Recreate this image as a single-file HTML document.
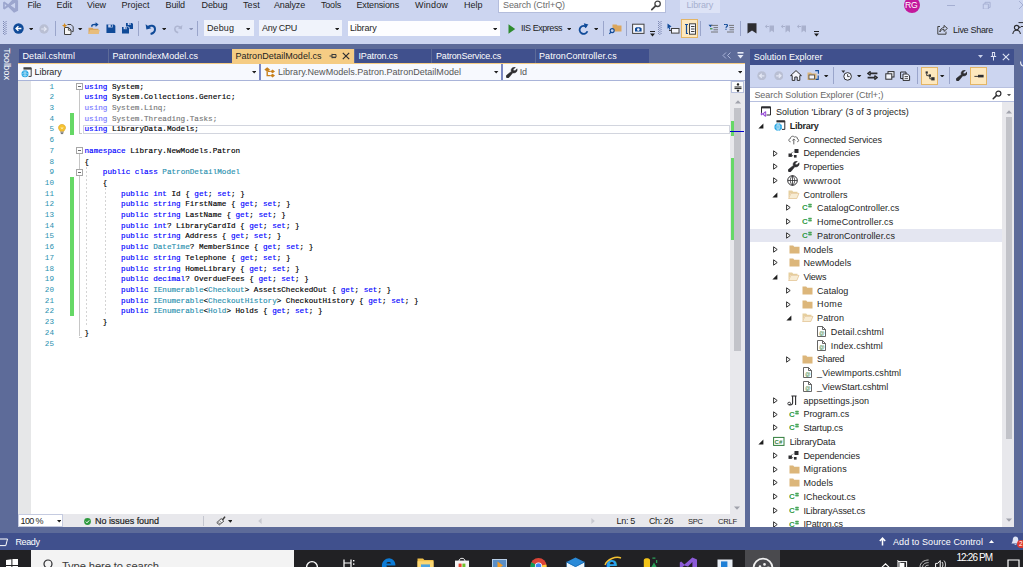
<!DOCTYPE html>
<html><head><meta charset="utf-8"><title>Library - Microsoft Visual Studio</title>
<style>
html,body{margin:0;padding:0;}
body{width:1023px;height:567px;overflow:hidden;position:relative;background:#ccd5f0;font-family:"Liberation Sans", sans-serif;}
#r{position:absolute;left:0;top:0;width:1023px;height:567px;overflow:hidden;}
#r div,#r span,#r svg,#r pre{position:absolute;}
#r span{white-space:pre;line-height:12px;}
#r pre{margin:0;font-family:"Liberation Mono", monospace;white-space:pre;-webkit-text-stroke:0.15px;}
.k{color:#0000ff}.t{color:#2b91af}.f{opacity:.55}
#r pre b{font-weight:400;position:static}
</style></head><body><div id="r">
<div style="left:0px;top:0px;width:1023px;height:44px;background:#ccd5f0;"></div>
<svg style="left:0px;top:-2px;" width="20" height="16" viewBox="0 -2 20 16"><path d="M3.1 2.3L4.4 1.4L8.2 4.2L13.6 -1.6L18.1 0.4V10.8L14 12.8L8.2 7L4.4 9.5L3.1 8.7ZM15.1 2.7L10.7 5.5L15.1 8.5ZM4.8 4V7.1L6.6 5.5Z" fill="#9ca6ce" fill-rule="evenodd"/></svg>
<span id="t0" style="left:27.5px;top:-1.0px;color:#1e1e1e;font-size:9.0px;letter-spacing:-0.254px;">File</span>
<span id="t1" style="left:56.5px;top:-1.0px;color:#1e1e1e;font-size:9.0px;letter-spacing:-0.004px;">Edit</span>
<span id="t2" style="left:87px;top:-1.0px;color:#1e1e1e;font-size:9.0px;letter-spacing:-0.090px;">View</span>
<span id="t3" style="left:121.5px;top:-1.0px;color:#1e1e1e;font-size:9.0px;letter-spacing:-0.002px;">Project</span>
<span id="t4" style="left:165.5px;top:-1.0px;color:#1e1e1e;font-size:9.0px;letter-spacing:-0.103px;">Build</span>
<span id="t5" style="left:201.5px;top:-1.0px;color:#1e1e1e;font-size:9.0px;letter-spacing:-0.106px;">Debug</span>
<span id="t6" style="left:243px;top:-1.0px;color:#1e1e1e;font-size:9.0px;letter-spacing:0.121px;">Test</span>
<span id="t7" style="left:274px;top:-1.0px;color:#1e1e1e;font-size:9.0px;letter-spacing:-0.147px;">Analyze</span>
<span id="t8" style="left:321px;top:-1.0px;color:#1e1e1e;font-size:9.0px;letter-spacing:-0.203px;">Tools</span>
<span id="t9" style="left:356.5px;top:-1.0px;color:#1e1e1e;font-size:9.0px;letter-spacing:-0.153px;">Extensions</span>
<span id="t10" style="left:415px;top:-1.0px;color:#1e1e1e;font-size:9.0px;letter-spacing:0.164px;">Window</span>
<span id="t11" style="left:464px;top:-1.0px;color:#1e1e1e;font-size:9.0px;letter-spacing:-0.004px;">Help</span>
<div style="left:498px;top:-1px;width:168px;height:14px;background:#fff;border:1px solid #b4bddc;box-sizing:border-box;"></div>
<span id="t12" style="left:503px;top:-0.7000000000000002px;color:#6a6a6a;font-size:9.0px;letter-spacing:-0.084px;">Search (Ctrl+Q)</span>
<svg style="left:649.8px;top:0px;" width="12" height="11" viewBox="0 0 12 11"><circle cx="7.6" cy="3.8" r="2.7" fill="none" stroke="#444" stroke-width="1.3"/><path d="M5.6 5.8L1.8 9.6" stroke="#444" stroke-width="1.7" stroke-linecap="round"/></svg>
<div style="left:680px;top:0px;width:39.5px;height:13px;background:#dde3f6;"></div>
<span id="t13" style="left:686.5px;top:-0.7000000000000002px;color:#a6afcf;font-size:9.0px;letter-spacing:-0.145px;">Library</span>
<div style="left:903.5px;top:-3px;width:16px;height:16px;background:#c3199c;border-radius:50%;"></div>
<span id="t14" style="left:905px;top:-0.5999999999999996px;color:#fff;font-size:8.6px;letter-spacing:-0.195px;">RG</span>
<div style="left:947.3px;top:4.6px;width:7.6px;height:1px;background:#a5afd2;"></div>
<svg style="left:981.6px;top:0.6px;" width="9.4" height="8.6" viewBox="0 0 11 10"><path d="M1.5 3.5H7.5V9.5H1.5ZM3.5 3.5V1.5H9.5V7.5H7.5" fill="none" stroke="#a5afd2" stroke-width="1.1"/></svg>
<svg style="left:1017.5px;top:0px;" width="8" height="10" viewBox="0 0 8 10"><path d="M1 1L9 9M9 1L1 9" stroke="#a5afd2" stroke-width="1"/></svg>
<svg style="left:3px;top:21px;" width="4" height="14" viewBox="0 0 4 14"><rect x="0" y="0" width="1" height="1" fill="#7d89b4"/><rect x="2.6" y="0" width="1" height="1" fill="#7d89b4"/><rect x="1.3" y="1" width="1" height="1" fill="#7d89b4"/><rect x="0" y="2" width="1" height="1" fill="#7d89b4"/><rect x="2.6" y="2" width="1" height="1" fill="#7d89b4"/><rect x="1.3" y="3" width="1" height="1" fill="#7d89b4"/><rect x="0" y="4" width="1" height="1" fill="#7d89b4"/><rect x="2.6" y="4" width="1" height="1" fill="#7d89b4"/><rect x="1.3" y="5" width="1" height="1" fill="#7d89b4"/><rect x="0" y="6" width="1" height="1" fill="#7d89b4"/><rect x="2.6" y="6" width="1" height="1" fill="#7d89b4"/><rect x="1.3" y="7" width="1" height="1" fill="#7d89b4"/><rect x="0" y="8" width="1" height="1" fill="#7d89b4"/><rect x="2.6" y="8" width="1" height="1" fill="#7d89b4"/><rect x="1.3" y="9" width="1" height="1" fill="#7d89b4"/><rect x="0" y="10" width="1" height="1" fill="#7d89b4"/><rect x="2.6" y="10" width="1" height="1" fill="#7d89b4"/><rect x="1.3" y="11" width="1" height="1" fill="#7d89b4"/><rect x="0" y="12" width="1" height="1" fill="#7d89b4"/><rect x="2.6" y="12" width="1" height="1" fill="#7d89b4"/><rect x="1.3" y="13" width="1" height="1" fill="#7d89b4"/></svg>
<svg style="left:12.5px;top:23px;" width="11" height="11" viewBox="0 0 11 11"><circle cx="5.5" cy="5.5" r="5.2" fill="#0f4a98"/><path d="M8.4 5.5H3.2M5.4 3.1L3 5.5L5.4 7.9" stroke="#fff" stroke-width="1.3" fill="none"/></svg>
<svg style="left:28.8px;top:27.7px;" width="4.4" height="2.6" viewBox="0 0 4.4 2.6"><path d="M0 0H4.4L2.2 2.6Z" fill="#1e1e1e"/></svg>
<svg style="left:39px;top:23.5px;" width="10" height="10" viewBox="0 0 10 10"><circle cx="5" cy="5" r="4.7" fill="#b9bfd3"/><path d="M2.2 5H7M5 2.9L7.2 5L5 7.1" stroke="#e4e8f5" stroke-width="1.2" fill="none"/></svg>
<div style="left:55px;top:21px;width:1px;height:14.5px;background:#9aa5cb;"></div>
<svg style="left:61.5px;top:22.5px;" width="12" height="12" viewBox="0 0 12 12"><path d="M5.5 1.5H9L11.2 3.8V8.6H9.6" fill="none" stroke="#424242" stroke-width="1"/><path d="M2.5 4.5H6.6L9 7V11.5H2.5Z" fill="#f6f6f6" stroke="#424242" stroke-width="1"/><path d="M6.4 4.5V7.2H9" fill="none" stroke="#424242" stroke-width="0.9"/><path d="M2.6 0L3.4 1.8L5.2 2.6L3.4 3.4L2.6 5.2L1.8 3.4L0 2.6L1.8 1.8Z" fill="#d18a1f"/></svg>
<svg style="left:78.3px;top:27.7px;" width="4.4" height="2.6" viewBox="0 0 4.4 2.6"><path d="M0 0H4.4L2.2 2.6Z" fill="#1e1e1e"/></svg>
<svg style="left:88px;top:22px;" width="12" height="13" viewBox="0 0 12 13"><path d="M0.5 5.8H4.5L5.5 6.8H10.5V12H0.5Z" fill="#d9a55c"/><path d="M2 8H11.8L10.4 12H0.5Z" fill="#e8bd7c"/><path d="M3 4.5C3 2.2 5 1.6 7.6 1.8V0.3L10.6 2.6L7.6 4.9V3.4C5.6 3.2 4.4 3.4 4.4 4.9Z" fill="#0f4a98"/></svg>
<svg style="left:105.8px;top:23.5px;" width="9.8" height="9.8" viewBox="0 0 11 11"><path d="M0.5 0.5H9L10.5 2V10.5H0.5Z" fill="#0f4a98"/><rect x="2.5" y="0.5" width="5" height="3.4" fill="#ccd5f0"/><rect x="5.3" y="1" width="1.4" height="2.2" fill="#0f4a98"/></svg>
<svg style="left:122px;top:23px;" width="11.2" height="10.6" viewBox="0 0 11.2 10.6"><path d="M4 0H10L11.2 1.2V6H4Z" fill="#0f4a98"/><rect x="5.8" y="0" width="3" height="2" fill="#ccd5f0"/><rect x="7.4" y="0.3" width="0.9" height="1.3" fill="#0f4a98"/><path d="M-0.4 3.6H6.6L7.6 4.6V11H-0.4Z" fill="#ccd5f0"/><path d="M0 4H6L7 5V10.6H0Z" fill="#0f4a98"/><rect x="1.6" y="4" width="3.2" height="2.2" fill="#ccd5f0"/><rect x="3.4" y="4.3" width="0.9" height="1.4" fill="#0f4a98"/></svg>
<div style="left:138.3px;top:21px;width:1px;height:14.5px;background:#9aa5cb;"></div>
<svg style="left:144.5px;top:22.5px;" width="12" height="12" viewBox="0 0 12 12"><path d="M2.6 4.4C5.2 1.6 9.8 2.4 10 6C10.1 8.6 8 10.4 5.6 11" fill="none" stroke="#0f4a98" stroke-width="2"/><path d="M0.6 1.2L1.4 6.6L6.4 5.2Z" fill="#0f4a98"/></svg>
<svg style="left:161.8px;top:27.7px;" width="4.4" height="2.6" viewBox="0 0 4.4 2.6"><path d="M0 0H4.4L2.2 2.6Z" fill="#1e1e1e"/></svg>
<svg style="left:172.5px;top:23.5px;" width="10" height="10" viewBox="0 0 10 10"><path d="M7.6 3.6C5.6 1.4 2 2 1.8 4.8C1.7 6.8 3.4 8.2 5.2 8.8" fill="none" stroke="#aeb6d2" stroke-width="1.6"/><path d="M9.4 1L8.8 5.4L4.8 4.2Z" fill="#aeb6d2"/></svg>
<svg style="left:188.8px;top:27.7px;" width="4.4" height="2.6" viewBox="0 0 4.4 2.6"><path d="M0 0H4.4L2.2 2.6Z" fill="#8d96b8"/></svg>
<div style="left:197.2px;top:21px;width:1px;height:14.5px;background:#9aa5cb;"></div>
<div style="left:204.3px;top:20.2px;width:49.8px;height:15.8px;background:#f0f3fb;"></div>
<span id="t15" style="left:207px;top:22.0px;color:#1e1e1e;font-size:9.0px;letter-spacing:0.094px;">Debug</span>
<svg style="left:245.8px;top:27.7px;" width="4.4" height="2.6" viewBox="0 0 4.4 2.6"><path d="M0 0H4.4L2.2 2.6Z" fill="#1e1e1e"/></svg>
<div style="left:259px;top:20.2px;width:83px;height:15.8px;background:#f0f3fb;"></div>
<span id="t16" style="left:262px;top:22.0px;color:#1e1e1e;font-size:9.0px;letter-spacing:-0.288px;">Any CPU</span>
<svg style="left:334.8px;top:27.7px;" width="4.4" height="2.6" viewBox="0 0 4.4 2.6"><path d="M0 0H4.4L2.2 2.6Z" fill="#1e1e1e"/></svg>
<div style="left:347.5px;top:20.5px;width:152px;height:15.5px;background:#fdfdff;"></div>
<span id="t17" style="left:350px;top:22.0px;color:#1e1e1e;font-size:9.0px;letter-spacing:-0.145px;">Library</span>
<svg style="left:492.8px;top:27.7px;" width="4.4" height="2.6" viewBox="0 0 4.4 2.6"><path d="M0 0H4.4L2.2 2.6Z" fill="#1e1e1e"/></svg>
<svg style="left:508px;top:23.5px;" width="8" height="10" viewBox="0 0 8 10"><path d="M0.5 0.3L7.2 5L0.5 9.7Z" fill="#2e8b2e"/></svg>
<span id="t18" style="left:521px;top:22.0px;color:#1e1e1e;font-size:9.0px;letter-spacing:-0.456px;">IIS Express</span>
<svg style="left:566.8px;top:27.7px;" width="4.4" height="2.6" viewBox="0 0 4.4 2.6"><path d="M0 0H4.4L2.2 2.6Z" fill="#1e1e1e"/></svg>
<svg style="left:577.5px;top:22.5px;" width="11" height="12" viewBox="0 0 11 12"><path d="M8.6 4.2A4 4 0 1 0 9.4 8.2" fill="none" stroke="#0f4a98" stroke-width="1.8"/><path d="M5.8 0.2L10.4 1.6L7.2 5.2Z" fill="#0f4a98"/></svg>
<svg style="left:593.8px;top:27.7px;" width="4.4" height="2.6" viewBox="0 0 4.4 2.6"><path d="M0 0H4.4L2.2 2.6Z" fill="#1e1e1e"/></svg>
<div style="left:602.7px;top:21px;width:1px;height:14.5px;background:#9aa5cb;"></div>
<svg style="left:609px;top:22.5px;" width="13" height="12" viewBox="0 0 13 12"><path d="M3.5 1.5H7.5L8.5 2.5H12.5V8.5H3.5Z" fill="#dba65c"/><circle cx="3.2" cy="7.6" r="2" fill="#ccd5f0" stroke="#0f4a98" stroke-width="1.1"/><path d="M1.8 9.2L0.4 11" stroke="#0f4a98" stroke-width="1.2"/></svg>
<div style="left:625.7px;top:21px;width:1px;height:14.5px;background:#9aa5cb;"></div>
<svg style="left:632px;top:22.5px;" width="13" height="12" viewBox="0 0 13 12"><rect x="0.6" y="1.2" width="11.4" height="9.2" fill="#f4f6fc" stroke="#424242" stroke-width="1"/><path d="M3 8.6V5.2L4.4 4.2H8L9.6 5.2V8.6Z" fill="#0f4a98"/><circle cx="6.3" cy="6.6" r="1.3" fill="#f4f6fc"/></svg>
<svg style="left:650px;top:30.5px;" width="5" height="6" viewBox="0 0 5 6"><rect x="0" y="0" width="5" height="1" fill="#1e1e1e"/><path d="M0 2.5H5L2.5 5.4Z" fill="#1e1e1e"/></svg>
<svg style="left:658px;top:21px;" width="4" height="14" viewBox="0 0 4 14"><rect x="0" y="0" width="1" height="1" fill="#7d89b4"/><rect x="2.6" y="0" width="1" height="1" fill="#7d89b4"/><rect x="1.3" y="1" width="1" height="1" fill="#7d89b4"/><rect x="0" y="2" width="1" height="1" fill="#7d89b4"/><rect x="2.6" y="2" width="1" height="1" fill="#7d89b4"/><rect x="1.3" y="3" width="1" height="1" fill="#7d89b4"/><rect x="0" y="4" width="1" height="1" fill="#7d89b4"/><rect x="2.6" y="4" width="1" height="1" fill="#7d89b4"/><rect x="1.3" y="5" width="1" height="1" fill="#7d89b4"/><rect x="0" y="6" width="1" height="1" fill="#7d89b4"/><rect x="2.6" y="6" width="1" height="1" fill="#7d89b4"/><rect x="1.3" y="7" width="1" height="1" fill="#7d89b4"/><rect x="0" y="8" width="1" height="1" fill="#7d89b4"/><rect x="2.6" y="8" width="1" height="1" fill="#7d89b4"/><rect x="1.3" y="9" width="1" height="1" fill="#7d89b4"/><rect x="0" y="10" width="1" height="1" fill="#7d89b4"/><rect x="2.6" y="10" width="1" height="1" fill="#7d89b4"/><rect x="1.3" y="11" width="1" height="1" fill="#7d89b4"/><rect x="0" y="12" width="1" height="1" fill="#7d89b4"/><rect x="2.6" y="12" width="1" height="1" fill="#7d89b4"/><rect x="1.3" y="13" width="1" height="1" fill="#7d89b4"/></svg>
<svg style="left:667px;top:22.5px;" width="13" height="12" viewBox="0 0 13 12"><path d="M0.5 0.5L4.6 3.6L2.6 4.2L3.4 6.4L2.4 6.8L1.6 4.8L0.5 5.8Z" fill="#0f4a98"/><rect x="4.5" y="5.5" width="7.5" height="4.6" fill="#f4f6fc" stroke="#424242" stroke-width="1"/><path d="M2 7.5H4.5" stroke="#424242" stroke-width="1"/></svg>
<div style="left:681px;top:19px;width:16.5px;height:18.5px;background:#fde8be;border:1px solid #e3b566;box-sizing:border-box;"></div>
<svg style="left:683.5px;top:22.5px;" width="12" height="12" viewBox="0 0 12 12"><path d="M1 1.5H4M2.5 1.5V10.5H4" fill="none" stroke="#0f4a98" stroke-width="1.2"/><rect x="5.5" y="0.8" width="6" height="10.4" fill="#f4f6fc" stroke="#424242" stroke-width="1"/><path d="M7 3.5H10.5M7 6H10.5M7 8.5H10.5" stroke="#424242" stroke-width="1"/></svg>
<div style="left:699.7px;top:21px;width:1px;height:14.5px;background:#9aa5cb;"></div>
<svg style="left:707.5px;top:23.5px;" width="11" height="10" viewBox="0 0 11 10"><path d="M0.5 0.8H4.5L2.5 3.2Z" fill="#0f4a98"/><path d="M3 1.4H10M5.5 3.6H10M5.5 5.8H10M3 8H10" stroke="#6a6a6a" stroke-width="0.9"/><path d="M2 4.8H4.5" stroke="#2e8b2e" stroke-width="1.1"/></svg>
<svg style="left:723.5px;top:23.5px;" width="11" height="10" viewBox="0 0 11 10"><path d="M0.4 1C0.6 -0.2 3.6 -0.2 3.4 1.6C3.3 2.6 2 2.8 2 3.8M2 4.8V5.8" fill="none" stroke="#0f4a98" stroke-width="1.2"/><path d="M5 1.4H10M5.5 3.6H10M5.5 5.8H10M3 8H10" stroke="#6a6a6a" stroke-width="0.9"/></svg>
<div style="left:739.7px;top:21px;width:1px;height:14.5px;background:#9aa5cb;"></div>
<svg style="left:746.5px;top:22.5px;" width="10" height="11" viewBox="0 0 10 11"><path d="M0.5 0.3H9.5V10.6L5 7.4L0.5 10.6Z" fill="#2d2d30"/></svg>
<svg style="left:765px;top:23.5px;" width="10" height="9" viewBox="0 0 10 9"><path d="M4.5 1.5H9V8.5L6.8 6.6L4.5 8.5Z" fill="#a9b1cd"/><path d="M0.5 2.5H4M2 0.8L0.4 2.5L2 4.2" stroke="#a9b1cd" stroke-width="1" fill="none"/></svg>
<svg style="left:781px;top:23.5px;" width="10" height="9" viewBox="0 0 10 9"><path d="M4.5 1.5H9V8.5L6.8 6.6L4.5 8.5Z" fill="#a9b1cd"/><path d="M0.5 2.5H4M2 0.8L0.4 2.5L2 4.2" stroke="#a9b1cd" stroke-width="1" fill="none"/></svg>
<svg style="left:797px;top:23.5px;" width="10" height="9" viewBox="0 0 10 9"><path d="M4.5 1.5H9V8.5L6.8 6.6L4.5 8.5Z" fill="#a9b1cd"/><path d="M0.5 2.5H4M2 0.8L0.4 2.5L2 4.2" stroke="#a9b1cd" stroke-width="1" fill="none"/></svg>
<svg style="left:813.5px;top:30.5px;" width="5" height="6" viewBox="0 0 5 6"><rect x="0" y="0" width="5" height="1" fill="#1e1e1e"/><path d="M0 2.5H5L2.5 5.4Z" fill="#1e1e1e"/></svg>
<svg style="left:936.5px;top:24.2px;" width="11" height="11" viewBox="0 0 11 11"><path d="M3 2.5H0.8V10.2H9V7.6" fill="none" stroke="#424242" stroke-width="1"/><path d="M2.8 8C3 5 5 3.6 7 3.6V1.4L10.4 4.4L7 7.4V5.4C5.2 5.4 3.8 6 2.8 8Z" fill="none" stroke="#424242" stroke-width="1"/></svg>
<span id="t19" style="left:953px;top:24.1px;color:#1e1e1e;font-size:9.0px;letter-spacing:-0.303px;">Live Share</span>
<svg style="left:1011.5px;top:22px;" width="12" height="13" viewBox="0 0 12 13"><circle cx="4.6" cy="5.6" r="2.2" fill="none" stroke="#2d2d30" stroke-width="1.1"/><path d="M0.8 12C1.2 9 3 8.2 4.6 8.2C6.2 8.2 8 9 8.4 12" fill="none" stroke="#2d2d30" stroke-width="1.1"/><path d="M6.5 0.6H12V4.5H9L7.6 6V4.5" fill="none" stroke="#2d2d30" stroke-width="1"/></svg>
<div style="left:0px;top:43.7px;width:1023px;height:505.8px;background:#5d6b99;"></div>
<div style="left:1021.6px;top:49px;width:1.4px;height:483px;background:#5568ad;"></div>
<svg style="left:1020px;top:61px;" width="3" height="6" viewBox="0 0 3 6"><path d="M0.6 0.5C0.4 3 1.4 4.6 3 5" fill="none" stroke="#e8ecf8" stroke-width="1.1"/></svg>
<span id="tb" style="left:0.7px;top:48.4px;color:#fff;font-size:9.3px;writing-mode:vertical-rl;line-height:12px;">Toolbox</span>
<div style="left:19px;top:49px;width:88.5px;height:13.5px;background:#40508d;"></div>
<span id="t20" style="left:22.5px;top:50.1px;color:#fff;font-size:9.0px;letter-spacing:0.076px;">Detail.cshtml</span>
<div style="left:108.5px;top:49px;width:123.0px;height:13.5px;background:#40508d;"></div>
<span id="t21" style="left:112.5px;top:50.1px;color:#fff;font-size:9.0px;letter-spacing:0.050px;">PatronIndexModel.cs</span>
<div style="left:354.5px;top:49px;width:76.5px;height:13.5px;background:#40508d;"></div>
<span id="t22" style="left:358.5px;top:50.1px;color:#fff;font-size:9.0px;letter-spacing:-0.153px;">IPatron.cs</span>
<div style="left:432px;top:49px;width:103px;height:13.5px;background:#40508d;"></div>
<span id="t23" style="left:436px;top:50.1px;color:#fff;font-size:9.0px;letter-spacing:-0.189px;">PatronService.cs</span>
<div style="left:536px;top:49px;width:113px;height:13.5px;background:#40508d;"></div>
<span id="t24" style="left:539px;top:50.1px;color:#fff;font-size:9.0px;letter-spacing:0.061px;">PatronController.cs</span>
<div style="left:232px;top:48.5px;width:122px;height:14px;background:#f5cc84;"></div>
<span id="t25" style="left:235.5px;top:50.1px;color:#1e1e1e;font-size:9.0px;letter-spacing:0.023px;">PatronDetailModel.cs</span>
<svg style="left:328.5px;top:51.5px;" width="8" height="8" viewBox="0 0 8 8"><path d="M0.5 4H3M3 1.8V6.2M3 2.5H7V5.2H3M3 5.6H7" fill="none" stroke="#3b3b3b" stroke-width="1"/></svg>
<svg style="left:342px;top:51.5px;" width="8" height="8" viewBox="0 0 8 8"><path d="M0.8 0.8L7.2 7.2M7.2 0.8L0.8 7.2" stroke="#2d2d30" stroke-width="1.2"/></svg>
<div style="left:18px;top:62.5px;width:726.5px;height:1.8px;background:#f5cc84;"></div>
<svg style="left:722px;top:52px;" width="10" height="7" viewBox="0 0 10 7"><path d="M4 0.5L1 3.5L4 6.5M8.5 0.5L5.5 3.5L8.5 6.5" fill="none" stroke="#aab4d8" stroke-width="1"/></svg>
<svg style="left:737px;top:51.5px;" width="7" height="7" viewBox="0 0 7 7"><rect x="0.5" y="0" width="6" height="1.6" fill="#e6eaf6"/><path d="M0.5 3H6.5L3.5 6.4Z" fill="#e6eaf6"/></svg>
<div style="left:18px;top:64px;width:726.5px;height:16.5px;background:#f7f9fe;border-bottom:1px solid #a9b4d9;box-sizing:border-box;"></div>
<div style="left:259px;top:64px;width:2px;height:16px;background:#7b88c2;"></div>
<div style="left:501px;top:64px;width:2px;height:16px;background:#7b88c2;"></div>
<svg style="left:21px;top:66.5px;" width="11" height="11" viewBox="0 0 11 11"><path d="M2.5 0.8H10.2V9.4H7.5" fill="none" stroke="#424242" stroke-width="1"/><path d="M2.5 0.8H10.2V2.6H2.5Z" fill="#424242"/><circle cx="4" cy="6.8" r="3.5" fill="#1ba1e2"/><path d="M0.6 6.8H7.4M4 3.4V10.2M1.6 4.6C3 5.6 5 5.6 6.4 4.6M1.6 9C3 8 5 8 6.4 9" stroke="#d8f0fb" stroke-width="0.6" fill="none"/></svg>
<span id="t26" style="left:34.5px;top:66.3px;color:#1e1e1e;font-size:9.0px;letter-spacing:-0.045px;">Library</span>
<svg style="left:251.8px;top:71.4px;" width="4.4" height="2.6" viewBox="0 0 4.4 2.6"><path d="M0 0H4.4L2.2 2.6Z" fill="#1e1e1e"/></svg>
<svg style="left:264px;top:66.5px;" width="12" height="11" viewBox="0 0 12 11"><path d="M0.4 2.6L3.2 0.2L6 2.6L3.2 5Z" fill="#c8811d"/><path d="M6.2 4.4L8.6 2.6L11 4.4L8.6 6.2Z" fill="#c8811d"/><path d="M6.2 8.6L8.6 6.8L11 8.6L8.6 10.4Z" fill="#c8811d"/><path d="M3.2 4.4V8.6H6.6M4 4.4H6.6" stroke="#c8811d" stroke-width="1.4" fill="none"/></svg>
<span id="t27" style="left:278px;top:66.3px;color:#555;font-size:9.0px;letter-spacing:0.026px;">Library.NewModels.Patron.PatronDetailModel</span>
<svg style="left:494.2px;top:71.4px;" width="4.4" height="2.6" viewBox="0 0 4.4 2.6"><path d="M0 0H4.4L2.2 2.6Z" fill="#1e1e1e"/></svg>
<svg style="left:506px;top:66.5px;" width="11.5" height="11" viewBox="0 0 11.5 11"><path d="M9.4 0.4C7.6 -0.2 5.6 0.8 5.2 2.6C5 3.4 5.2 4 5.4 4.4L0.6 8.2C-0.2 9 0 10 0.6 10.6C1.2 11.2 2.2 11.2 3 10.4L6.8 5.8C8.4 6.4 10.4 5.6 11 3.8C11.2 3.2 11.2 2.4 11 1.8L9 3.8L7.4 3.6L7.2 2.2Z" fill="#2d2d30" stroke="#2d2d30" stroke-width="0.5"/></svg>
<span id="t28" style="left:519.7px;top:66.3px;color:#555;font-size:9.0px;letter-spacing:-0.108px;">Id</span>
<svg style="left:737.5px;top:71.4px;" width="4.4" height="2.6" viewBox="0 0 4.4 2.6"><path d="M0 0H4.4L2.2 2.6Z" fill="#1e1e1e"/></svg>
<div style="left:18px;top:80.5px;width:712px;height:433.5px;background:#fff;"></div>
<div style="left:18px;top:80.5px;width:13px;height:433.5px;background:#e6e7e8;"></div>
<div style="left:70px;top:113.15px;width:4px;height:21.4px;background:#66d866;"></div>
<div style="left:70px;top:177.35px;width:4px;height:139.1px;background:#66d866;"></div>
<div style="left:83px;top:124.5px;width:646.5px;height:9px;background:transparent;border:1px solid #d2d5de;box-sizing:border-box;"></div>
<div style="left:78.8px;top:89.9px;width:1.5px;height:43.29999999999998px;background:#c6c6c6;"></div>
<div style="left:79px;top:133.2px;width:3px;height:1px;background:#c6c6c6;"></div>
<div style="left:78.8px;top:154.1px;width:1.5px;height:182.4px;background:#c6c6c6;"></div>
<div style="left:79px;top:336.5px;width:3px;height:1px;background:#c6c6c6;"></div>
<svg style="left:76px;top:82.9px;" width="7" height="7" viewBox="0 0 7 7"><rect x="0.5" y="0.5" width="6" height="6" fill="#fff" stroke="#a6a6a6" stroke-width="1"/><path d="M2 3.5H5" stroke="#6a6a6a" stroke-width="1"/></svg>
<svg style="left:76px;top:147.1px;" width="7" height="7" viewBox="0 0 7 7"><rect x="0.5" y="0.5" width="6" height="6" fill="#fff" stroke="#a6a6a6" stroke-width="1"/><path d="M2 3.5H5" stroke="#6a6a6a" stroke-width="1"/></svg>
<svg style="left:76px;top:168.5px;" width="7" height="7" viewBox="0 0 7 7"><rect x="0.5" y="0.5" width="6" height="6" fill="#fff" stroke="#a6a6a6" stroke-width="1"/><path d="M2 3.5H5" stroke="#6a6a6a" stroke-width="1"/></svg>
<div style="left:86px;top:166.65px;width:1px;height:160.49999999999997px;background:repeating-linear-gradient(to bottom,#d4d4d4 0,#d4d4d4 2px,transparent 2px,transparent 4px);"></div>
<div style="left:105px;top:188.05px;width:1px;height:128.39999999999992px;background:repeating-linear-gradient(to bottom,#d4d4d4 0,#d4d4d4 2px,transparent 2px,transparent 4px);"></div>
<svg style="left:58px;top:123.69999999999999px;" width="8" height="11" viewBox="0 0 8 11"><path d="M4 0.4C1.8 0.4 0.5 2 0.5 3.7C0.5 5.2 1.6 5.8 2 7.2H6C6.4 5.8 7.5 5.2 7.5 3.7C7.5 2 6.2 0.4 4 0.4Z" fill="#f7c331" stroke="#d9a019" stroke-width="0.6"/><path d="M2.4 8.2H5.6M2.8 9.6H5.2" stroke="#6b6b6b" stroke-width="1"/><path d="M3 3.2L4 5L5 3.2" stroke="#fff6cf" stroke-width="0.7" fill="none"/></svg>
<pre style="left:24px;top:81.65px;width:30px;text-align:right;font-size:7.633px;line-height:10.7px;color:#2b91af;-webkit-text-stroke:0;">1
2
3
4
5
6
7
8
9
10
11
12
13
14
15
16
17
18
19
20
21
22
23
24
25</pre>
<pre style="left:84.5px;top:81.65px;font-size:7.633px;line-height:10.7px;color:#000;"><b class="k">using</b> System;
<b class="k">using</b> System.Collections.Generic;
<b class="f"><b class="k">using</b> System.Linq;</b>
<b class="f"><b class="k">using</b> System.Threading.Tasks;</b>
<b class="k">using</b> LibraryData.Models;

<b class="k">namespace</b> Library.NewModels.Patron
{
    <b class="k">public</b> <b class="k">class</b> <b class="t">PatronDetailModel</b>
    {
        <b class="k">public</b> <b class="k">int</b> Id { <b class="k">get</b>; <b class="k">set</b>; }
        <b class="k">public</b> <b class="k">string</b> FirstName { <b class="k">get</b>; <b class="k">set</b>; }
        <b class="k">public</b> <b class="k">string</b> LastName { <b class="k">get</b>; <b class="k">set</b>; }
        <b class="k">public</b> <b class="k">int</b>? LibraryCardId { <b class="k">get</b>; <b class="k">set</b>; }
        <b class="k">public</b> <b class="k">string</b> Address { <b class="k">get</b>; <b class="k">set</b>; }
        <b class="k">public</b> <b class="t">DateTime</b>? MemberSince { <b class="k">get</b>; <b class="k">set</b>; }
        <b class="k">public</b> <b class="k">string</b> Telephone { <b class="k">get</b>; <b class="k">set</b>; }
        <b class="k">public</b> <b class="k">string</b> HomeLibrary { <b class="k">get</b>; <b class="k">set</b>; }
        <b class="k">public</b> <b class="k">decimal</b>? OverdueFees { <b class="k">get</b>; <b class="k">set</b>; }
        <b class="k">public</b> <b class="t">IEnumerable</b>&lt;<b class="t">Checkout</b>&gt; AssetsCheckedOut { <b class="k">get</b>; <b class="k">set</b>; }
        <b class="k">public</b> <b class="t">IEnumerable</b>&lt;<b class="t">CheckoutHistory</b>&gt; CheckoutHistory { <b class="k">get</b>; <b class="k">set</b>; }
        <b class="k">public</b> <b class="t">IEnumerable</b>&lt;<b class="t">Hold</b>&gt; Holds { <b class="k">get</b>; <b class="k">set</b>; }
    }
}
</pre>
<div style="left:730px;top:80.5px;width:14.5px;height:433.5px;background:#e8e8ec;"></div>
<div style="left:730.5px;top:80.5px;width:13.5px;height:12.5px;background:#fdfdfd;border:1px solid #b8c0dc;box-sizing:border-box;"></div>
<svg style="left:733.5px;top:82.5px;" width="8" height="9" viewBox="0 0 8 9"><path d="M0.5 4H7.5M0.5 5.6H7.5M4 0V3M4 6.6V9" stroke="#1e1e1e" stroke-width="1"/><path d="M2.4 2L4 0.2L5.6 2ZM2.4 7L4 8.8L5.6 7Z" fill="#1e1e1e"/></svg>
<svg style="left:734.5px;top:99.5px;" width="6" height="4" viewBox="0 0 6 4"><path d="M0 3.6L3 0.2L6 3.6Z" fill="#a0a2ab"/></svg>
<div style="left:733.5px;top:107.5px;width:7.5px;height:243px;background:#c2c3c9;"></div>
<div style="left:730.5px;top:120.5px;width:3.5px;height:15px;background:#66d866;"></div>
<div style="left:730.5px;top:157.5px;width:3.5px;height:82px;background:#66d866;"></div>
<div style="left:730px;top:131px;width:14px;height:1px;background:#0000cd;"></div>
<svg style="left:734px;top:505.8px;" width="6" height="4" viewBox="0 0 6 4"><path d="M0 0.4L3 3.8L6 0.4Z" fill="#a0a2ab"/></svg>
<div style="left:18px;top:514px;width:726.5px;height:13px;background:#e8e8ec;"></div>
<div style="left:18.3px;top:514.3px;width:45px;height:12.5px;background:#fff;border:1px solid #c5cbe0;box-sizing:border-box;"></div>
<span id="t29" style="left:20.5px;top:515.3px;color:#1e1e1e;font-size:9.0px;letter-spacing:-0.606px;">100 %</span>
<svg style="left:56.8px;top:520.2px;" width="4.4" height="2.6" viewBox="0 0 4.4 2.6"><path d="M0 0H4.4L2.2 2.6Z" fill="#1e1e1e"/></svg>
<svg style="left:83.5px;top:517.8px;" width="7" height="7" viewBox="0 0 7 7"><circle cx="3.5" cy="3.5" r="3.4" fill="#2f9a3f"/><path d="M1.8 3.6L3 4.8L5.2 2.4" stroke="#fff" stroke-width="1" fill="none"/></svg>
<span id="t30" style="left:95px;top:515.3px;color:#1e1e1e;font-size:9.0px;letter-spacing:-0.036px;-webkit-text-stroke:0.2px;">No issues found</span>
<div style="left:203px;top:516px;width:1px;height:10px;background:#c4c6cf;"></div>
<svg style="left:215.5px;top:516px;" width="10" height="10" viewBox="0 0 10 10"><path d="M5.2 2.6L7.8 5.2L3.4 8.8L0.8 6.6Z" fill="#f4f4f6" stroke="#3a3a3a" stroke-width="0.9"/><path d="M6.4 4L9 0.6" stroke="#3a3a3a" stroke-width="1.5"/><path d="M2.4 6.2L4 8M3.8 5L5.4 6.8" stroke="#3a3a3a" stroke-width="0.6"/></svg>
<svg style="left:227.7px;top:520.1999999999999px;" width="4.6" height="2.8" viewBox="0 0 4.6 2.8"><path d="M0 0H4.6L2.3 2.8Z" fill="#1e1e1e"/></svg>
<svg style="left:257.5px;top:518px;" width="4" height="6" viewBox="0 0 4 6"><path d="M3.6 0L0.2 3L3.6 6Z" fill="#c8c9d0"/></svg>
<svg style="left:591px;top:518px;" width="4" height="6" viewBox="0 0 4 6"><path d="M0.4 0L3.8 3L0.4 6Z" fill="#c8c9d0"/></svg>
<span id="t31" style="left:616.5px;top:515.3px;color:#1e1e1e;font-size:9.0px;letter-spacing:-0.306px;">Ln: 5</span>
<span id="t32" style="left:649px;top:515.3px;color:#1e1e1e;font-size:9.0px;letter-spacing:-0.422px;">Ch: 26</span>
<span id="t33" style="left:688px;top:516.1999999999999px;color:#1e1e1e;font-size:7.6px;letter-spacing:-0.308px;">SPC</span>
<span id="t34" style="left:718px;top:516.1999999999999px;color:#1e1e1e;font-size:7.6px;letter-spacing:-0.236px;">CRLF</span>
<div style="left:750.2px;top:49px;width:264.19999999999993px;height:15.5px;background:#40508d;"></div>
<span id="t35" style="left:753.8px;top:51.4px;color:#fff;font-size:9.0px;letter-spacing:0.009px;">Solution Explorer</span>
<svg style="left:978.2px;top:55.1px;" width="5" height="3" viewBox="0 0 5 3"><path d="M0 0H5L2.5 3Z" fill="#c9d0ea"/></svg>
<svg style="left:989.5px;top:52px;" width="7" height="9" viewBox="0 0 7 9"><path d="M2 0.5H5M2.4 0.5V4.5M4.6 0.5V4.5M0.8 4.5H6.2M3.5 4.5V8.5" stroke="#dfe4f4" stroke-width="1" fill="none"/></svg>
<svg style="left:1002px;top:52.5px;" width="8" height="8" viewBox="0 0 8 8"><path d="M0.8 0.8L7.2 7.2M7.2 0.8L0.8 7.2" stroke="#dfe4f4" stroke-width="1.1"/></svg>
<div style="left:750.2px;top:64.5px;width:264.19999999999993px;height:22.2px;background:#ccd5f0;"></div>
<svg style="left:757px;top:70.8px;" width="9.6" height="9.6" viewBox="0 0 9.6 9.6"><circle cx="4.8" cy="4.8" r="4.5" fill="#b9bfd3"/><path d="M7.4 4.8H2.8M4.8 2.8L2.6 4.8L4.8 6.8" stroke="#e4e8f5" stroke-width="1.2" fill="none"/></svg>
<svg style="left:773.6px;top:70.8px;" width="9.6" height="9.6" viewBox="0 0 9.6 9.6"><circle cx="4.8" cy="4.8" r="4.5" fill="#b9bfd3"/><path d="M2.2 4.8H6.8M4.8 2.8L7 4.8L4.8 6.8" stroke="#e4e8f5" stroke-width="1.2" fill="none"/></svg>
<svg style="left:789.5px;top:70.1px;" width="12" height="11" viewBox="0 0 12 11"><path d="M6 0.6L11.4 5.6H9.8V10.4H7.2V7H4.8V10.4H2.2V5.6H0.6Z" fill="#f4f6fc" stroke="#2d2d30" stroke-width="1" stroke-linejoin="round"/></svg>
<svg style="left:807px;top:70.1px;" width="12" height="11" viewBox="0 0 12 11"><path d="M0.5 2.5H4L5 3.5H9.5V10H0.5Z" fill="#dcb67a"/><rect x="2" y="5" width="5.4" height="4" fill="#f4f6fc" stroke="#424242" stroke-width="0.8"/><path d="M8.2 0.6H11.4V3.8M11.2 5.6V9.4H8.6" fill="none" stroke="#0f4a98" stroke-width="1.1"/></svg>
<svg style="left:824.1999999999999px;top:74.89999999999999px;" width="4.4" height="2.6" viewBox="0 0 4.4 2.6"><path d="M0 0H4.4L2.2 2.6Z" fill="#1e1e1e"/></svg>
<div style="left:833px;top:67px;width:1px;height:17px;background:#9aa5cb;"></div>
<svg style="left:840.5px;top:70.1px;" width="12" height="11" viewBox="0 0 12 11"><circle cx="6.6" cy="6.4" r="3.8" fill="#f4f6fc" stroke="#2d2d30" stroke-width="1"/><path d="M6.6 4.2V6.6H8.6" fill="none" stroke="#2d2d30" stroke-width="0.9"/><path d="M0.4 0.6H4.2L2.3 3Z" fill="#2d2d30"/></svg>
<svg style="left:857.4px;top:74.89999999999999px;" width="4.4" height="2.6" viewBox="0 0 4.4 2.6"><path d="M0 0H4.4L2.2 2.6Z" fill="#1e1e1e"/></svg>
<svg style="left:866.5px;top:71.1px;" width="11" height="9" viewBox="0 0 11 9"><path d="M3 2.4H10.4M3.6 0.4L1 2.4L3.6 4.4M8 6.6H0.6M7.4 4.6L10 6.6L7.4 8.6" fill="none" stroke="#2d2d30" stroke-width="1.6"/></svg>
<svg style="left:884.5px;top:71.1px;" width="10" height="9" viewBox="0 0 10 9"><rect x="3" y="0.6" width="6" height="5.4" fill="#f4f6fc" stroke="#2d2d30" stroke-width="1"/><rect x="0.8" y="2.8" width="6" height="5.4" fill="#f4f6fc" stroke="#2d2d30" stroke-width="1"/></svg>
<svg style="left:900px;top:70.6px;" width="11" height="10" viewBox="0 0 11 10"><path d="M0.6 1H6V3" fill="none" stroke="#2d2d30" stroke-width="1"/><path d="M0.6 1V7.5H3" fill="none" stroke="#2d2d30" stroke-width="1"/><path d="M3 3H7.6L9.6 5V9.4H3Z" fill="#f4f6fc" stroke="#2d2d30" stroke-width="1"/><path d="M4.6 5.5H8M4.6 7.4H8" stroke="#2d2d30" stroke-width="0.8"/></svg>
<div style="left:917px;top:67px;width:1px;height:17px;background:#9aa5cb;"></div>
<div style="left:921.3px;top:66.5px;width:16.6px;height:18.1px;background:#fde8be;border:1px solid #e3b566;box-sizing:border-box;"></div>
<svg style="left:924.5px;top:70.6px;" width="10" height="10" viewBox="0 0 10 10"><rect x="0.6" y="0.4" width="2.2" height="2.2" fill="#2d2d30"/><rect x="3.6" y="3.4" width="2.4" height="2.4" fill="#2d2d30"/><rect x="6.2" y="6.2" width="3.4" height="3.2" fill="#2d2d30"/><path d="M1.7 2.6V4.6H3.6M4.8 5.8V7.8H6.2" fill="none" stroke="#2d2d30" stroke-width="0.9"/></svg>
<svg style="left:940.3px;top:74.89999999999999px;" width="4.4" height="2.6" viewBox="0 0 4.4 2.6"><path d="M0 0H4.4L2.2 2.6Z" fill="#1e1e1e"/></svg>
<div style="left:949px;top:67px;width:1px;height:17px;background:#9aa5cb;"></div>
<svg style="left:955.5px;top:70.1px;" width="11.5" height="11" viewBox="0 0 11.5 11"><path d="M9.4 0.4C7.6 -0.2 5.6 0.8 5.2 2.6C5 3.4 5.2 4 5.4 4.4L0.6 8.2C-0.2 9 0 10 0.6 10.6C1.2 11.2 2.2 11.2 3 10.4L6.8 5.8C8.4 6.4 10.4 5.6 11 3.8C11.2 3.2 11.2 2.4 11 1.8L9 3.8L7.4 3.6L7.2 2.2Z" fill="#2d2d30" stroke="#2d2d30" stroke-width="0.5"/></svg>
<div style="left:970.4px;top:66.5px;width:16.6px;height:18.1px;background:#fde8be;border:1px solid #e3b566;box-sizing:border-box;"></div>
<svg style="left:974px;top:73.6px;" width="10" height="4" viewBox="0 0 10 4"><path d="M0.4 2.4H4" stroke="#2d2d30" stroke-width="0.9"/><rect x="4" y="0.8" width="5.6" height="2.6" fill="#2d2d30"/></svg>
<div style="left:750.2px;top:86.6px;width:264.19999999999993px;height:15.8px;background:#fff;border-top:1px solid #b7c0df;border-bottom:1px solid #b7c0df;box-sizing:border-box;"></div>
<span id="t36" style="left:754.4px;top:88.6px;color:#666;font-size:9.0px;letter-spacing:-0.019px;">Search Solution Explorer (Ctrl+;)</span>
<svg style="left:992px;top:90px;" width="10" height="10" viewBox="0 0 10 10"><circle cx="6.4" cy="3.6" r="2.5" fill="none" stroke="#2d2d30" stroke-width="1.2"/><path d="M4.6 5.4L1.2 8.8" stroke="#2d2d30" stroke-width="1.5" stroke-linecap="round"/></svg>
<svg style="left:1007.0px;top:94.0px;" width="4" height="2.4" viewBox="0 0 4 2.4"><path d="M0 0H4L2.0 2.4Z" fill="#555"/></svg>
<div style="left:750.2px;top:102.2px;width:251.79999999999995px;height:424.8px;background:#fff;"></div>
<div style="left:1002px;top:102.2px;width:12.399999999999977px;height:424.8px;background:#e8e8ec;"></div>
<svg style="left:1005.5px;top:109.5px;" width="6" height="4" viewBox="0 0 6 4"><path d="M0 3.6L3 0.2L6 3.6Z" fill="#a0a2ab"/></svg>
<div style="left:1005.5px;top:116.7px;width:6px;height:322.3px;background:#c2c3c9;"></div>
<svg style="left:1005.5px;top:518px;" width="6" height="4" viewBox="0 0 6 4"><path d="M0 0.4L3 3.8L6 0.4Z" fill="#a0a2ab"/></svg>
<div style="left:750.2px;top:228.58999999999997px;width:251.79999999999995px;height:13.74px;background:#e4e6f1;"></div>
<div style="left:750.2px;top:102.2px;width:251.79999999999995px;height:424.8px;overflow:hidden;"><div style="left:-750.2px;top:-102.2px;width:1023px;height:567px;">
<svg style="left:759.6px;top:106.3px;" width="12" height="11" viewBox="0 0 12 11"><path d="M1.5 8.5V0.8H10.5V9H6.5" fill="none" stroke="#2d2d30" stroke-width="1"/><path d="M1.5 0.8H10.5V2.4H1.5Z" fill="#2d2d30"/><path d="M5.2 5.2L6.2 5.6V10.4L5.2 10.8L2.6 8.6L1.4 9.4L0.8 9V7L1.4 6.6L2.6 7.4ZM5.2 6.8L3.8 8L5.2 9.2Z" fill="#9a4fd8" fill-rule="evenodd"/></svg>
<span id="t37" style="left:776.0px;top:106.1px;color:#1e1e1e;font-size:9.0px;letter-spacing:0.050px;">Solution 'Library' (3 of 3 projects)</span>
<svg style="left:758.4000000000001px;top:123.03999999999999px;" width="6" height="6" viewBox="0 0 6 6"><path d="M5.4 0.4V5.4H0.4Z" fill="#1e1e1e"/></svg>
<svg style="left:773.7px;top:120.03999999999999px;" width="12" height="11" viewBox="0 0 12 11"><path d="M2.5 0.8H10.8V9.4H8" fill="none" stroke="#2d2d30" stroke-width="1"/><path d="M2.5 0.8H10.8V2.4H2.5Z" fill="#2d2d30"/><circle cx="4.2" cy="7" r="3.8" fill="#1ba1e2"/><path d="M0.5 7H7.9M4.2 3.3V10.7M1.6 4.6C3 5.6 5.4 5.6 6.8 4.6M1.6 9.4C3 8.4 5.4 8.4 6.8 9.4M4.2 3.3C2.4 5 2.4 9 4.2 10.7M4.2 3.3C6 5 6 9 4.2 10.7" stroke="#d8f0fb" stroke-width="0.55" fill="none"/></svg>
<span id="t38" style="left:789.7px;top:119.83999999999999px;color:#1e1e1e;font-size:9.0px;font-weight:700;letter-spacing:-0.259px;">Library</span>
<svg style="left:787.5px;top:133.78px;" width="12" height="11" viewBox="0 0 12 11"><path d="M2.6 7.8C0.4 7.8 0.2 4.8 2.4 4.6C2.4 2.4 5 1.4 6.4 3C8 2.2 9.8 3.4 9.4 5C11.2 5.2 11 7.8 9.2 7.8" fill="none" stroke="#555" stroke-width="0.9"/><path d="M5.8 5V10.4M4.4 6.4L5.8 5L7.2 6.4" fill="none" stroke="#555" stroke-width="0.9"/></svg>
<span id="t39" style="left:803.4px;top:133.58px;color:#1e1e1e;font-size:9.0px;letter-spacing:-0.114px;">Connected Services</span>
<svg style="left:772.6px;top:149.51999999999998px;" width="5" height="7" viewBox="0 0 5 7"><path d="M0.6 0.8L4.2 3.5L0.6 6.2Z" fill="#fff" stroke="#1e1e1e" stroke-width="0.9"/></svg>
<svg style="left:787.6px;top:147.51999999999998px;" width="12" height="11" viewBox="0 0 12 11"><rect x="0.5" y="5.5" width="3.4" height="3.4" fill="#2d2d30"/><rect x="6.5" y="1" width="4" height="4" fill="#2d2d30"/><rect x="6" y="7" width="2.6" height="2.6" fill="#2d2d30"/><path d="M3 5.5L6.5 3.2M4 7.6L6 8" stroke="#2d2d30" stroke-width="0.8" stroke-dasharray="1 0.8"/></svg>
<span id="t40" style="left:803.4px;top:147.32px;color:#1e1e1e;font-size:9.0px;letter-spacing:-0.096px;">Dependencies</span>
<svg style="left:772.6px;top:163.26px;" width="5" height="7" viewBox="0 0 5 7"><path d="M0.6 0.8L4.2 3.5L0.6 6.2Z" fill="#fff" stroke="#1e1e1e" stroke-width="0.9"/></svg>
<svg style="left:787.6px;top:161.26px;" width="12" height="11" viewBox="0 0 12 11"><path d="M9.4 0.4C7.6 -0.2 5.6 0.8 5.2 2.6C5 3.4 5.2 4 5.4 4.4L0.6 8.2C-0.2 9 0 10 0.6 10.6C1.2 11.2 2.2 11.2 3 10.4L6.8 5.8C8.4 6.4 10.4 5.6 11 3.8C11.2 3.2 11.2 2.4 11 1.8L9 3.8L7.4 3.6L7.2 2.2Z" fill="#2d2d30" stroke="#2d2d30" stroke-width="0.5"/></svg>
<span id="t41" style="left:803.4px;top:161.06px;color:#1e1e1e;font-size:9.0px;letter-spacing:-0.073px;">Properties</span>
<svg style="left:772.6px;top:177.0px;" width="5" height="7" viewBox="0 0 5 7"><path d="M0.6 0.8L4.2 3.5L0.6 6.2Z" fill="#fff" stroke="#1e1e1e" stroke-width="0.9"/></svg>
<svg style="left:787.1px;top:175.0px;" width="12" height="11" viewBox="0 0 12 11"><circle cx="5.5" cy="5.5" r="4.8" fill="none" stroke="#2d2d30" stroke-width="1"/><path d="M0.7 5.5H10.3M5.5 0.7V10.3M5.5 0.7C2.6 3 2.6 8 5.5 10.3M5.5 0.7C8.4 3 8.4 8 5.5 10.3" fill="none" stroke="#2d2d30" stroke-width="0.8"/></svg>
<span id="t42" style="left:803.4px;top:174.8px;color:#1e1e1e;font-size:9.0px;letter-spacing:0.369px;">wwwroot</span>
<svg style="left:772.1px;top:191.74px;" width="6" height="6" viewBox="0 0 6 6"><path d="M5.4 0.4V5.4H0.4Z" fill="#1e1e1e"/></svg>
<svg style="left:787.8000000000001px;top:188.74px;" width="12" height="11" viewBox="0 0 12 11"><path d="M0.5 1.5H4.2L5.2 2.8H9.5V4H2.6L0.5 8.6Z" fill="#e6cf9f"/><path d="M2.8 4.4H11L8.8 9.5H0.6Z" fill="#f7ecd4" stroke="#dcb67a" stroke-width="0.6"/></svg>
<span id="t43" style="left:803.4px;top:188.54000000000002px;color:#1e1e1e;font-size:9.0px;letter-spacing:0.053px;">Controllers</span>
<svg style="left:786.3000000000001px;top:204.48000000000002px;" width="5" height="7" viewBox="0 0 5 7"><path d="M0.6 0.8L4.2 3.5L0.6 6.2Z" fill="#fff" stroke="#1e1e1e" stroke-width="0.9"/></svg>
<svg style="left:802.3000000000001px;top:202.48000000000002px;" width="12" height="11" viewBox="0 0 12 11"><text x="0" y="7.6" font-family="Liberation Sans, sans-serif" font-size="8" font-weight="700" fill="#2f9a3f">C</text><path d="M6.2 2.6H9.8M6.2 4.6H9.8M7.2 1.6V5.6M8.8 1.6V5.6" stroke="#2f9a3f" stroke-width="0.8"/></svg>
<span id="t44" style="left:817.1px;top:202.28000000000003px;color:#1e1e1e;font-size:9.0px;letter-spacing:0.058px;">CatalogController.cs</span>
<svg style="left:786.3000000000001px;top:218.22px;" width="5" height="7" viewBox="0 0 5 7"><path d="M0.6 0.8L4.2 3.5L0.6 6.2Z" fill="#fff" stroke="#1e1e1e" stroke-width="0.9"/></svg>
<svg style="left:802.3000000000001px;top:216.22px;" width="12" height="11" viewBox="0 0 12 11"><text x="0" y="7.6" font-family="Liberation Sans, sans-serif" font-size="8" font-weight="700" fill="#2f9a3f">C</text><path d="M6.2 2.6H9.8M6.2 4.6H9.8M7.2 1.6V5.6M8.8 1.6V5.6" stroke="#2f9a3f" stroke-width="0.8"/></svg>
<span id="t45" style="left:817.1px;top:216.02px;color:#1e1e1e;font-size:9.0px;letter-spacing:0.133px;">HomeController.cs</span>
<svg style="left:786.3000000000001px;top:231.95999999999998px;" width="5" height="7" viewBox="0 0 5 7"><path d="M0.6 0.8L4.2 3.5L0.6 6.2Z" fill="#fff" stroke="#1e1e1e" stroke-width="0.9"/></svg>
<svg style="left:802.3000000000001px;top:229.95999999999998px;" width="12" height="11" viewBox="0 0 12 11"><text x="0" y="7.6" font-family="Liberation Sans, sans-serif" font-size="8" font-weight="700" fill="#2f9a3f">C</text><path d="M6.2 2.6H9.8M6.2 4.6H9.8M7.2 1.6V5.6M8.8 1.6V5.6" stroke="#2f9a3f" stroke-width="0.8"/></svg>
<span id="t46" style="left:817.1px;top:229.76px;color:#1e1e1e;font-size:9.0px;letter-spacing:0.071px;">PatronController.cs</span>
<svg style="left:772.6px;top:245.7px;" width="5" height="7" viewBox="0 0 5 7"><path d="M0.6 0.8L4.2 3.5L0.6 6.2Z" fill="#fff" stroke="#1e1e1e" stroke-width="0.9"/></svg>
<svg style="left:788.6px;top:243.7px;" width="12" height="11" viewBox="0 0 12 11"><path d="M0.5 1.5H4.2L5.2 2.8H10.5V9.5H0.5Z" fill="#dcb67a"/></svg>
<span id="t47" style="left:803.4px;top:243.5px;color:#1e1e1e;font-size:9.0px;letter-spacing:0.131px;">Models</span>
<svg style="left:772.6px;top:259.44px;" width="5" height="7" viewBox="0 0 5 7"><path d="M0.6 0.8L4.2 3.5L0.6 6.2Z" fill="#fff" stroke="#1e1e1e" stroke-width="0.9"/></svg>
<svg style="left:788.6px;top:257.44px;" width="12" height="11" viewBox="0 0 12 11"><path d="M0.5 1.5H4.2L5.2 2.8H10.5V9.5H0.5Z" fill="#dcb67a"/></svg>
<span id="t48" style="left:803.4px;top:257.24px;color:#1e1e1e;font-size:9.0px;letter-spacing:0.119px;">NewModels</span>
<svg style="left:772.1px;top:274.18px;" width="6" height="6" viewBox="0 0 6 6"><path d="M5.4 0.4V5.4H0.4Z" fill="#1e1e1e"/></svg>
<svg style="left:787.8000000000001px;top:271.18px;" width="12" height="11" viewBox="0 0 12 11"><path d="M0.5 1.5H4.2L5.2 2.8H9.5V4H2.6L0.5 8.6Z" fill="#e6cf9f"/><path d="M2.8 4.4H11L8.8 9.5H0.6Z" fill="#f7ecd4" stroke="#dcb67a" stroke-width="0.6"/></svg>
<span id="t49" style="left:803.4px;top:270.98px;color:#1e1e1e;font-size:9.0px;letter-spacing:-0.212px;">Views</span>
<svg style="left:786.3000000000001px;top:286.92px;" width="5" height="7" viewBox="0 0 5 7"><path d="M0.6 0.8L4.2 3.5L0.6 6.2Z" fill="#fff" stroke="#1e1e1e" stroke-width="0.9"/></svg>
<svg style="left:802.3000000000001px;top:284.92px;" width="12" height="11" viewBox="0 0 12 11"><path d="M0.5 1.5H4.2L5.2 2.8H10.5V9.5H0.5Z" fill="#dcb67a"/></svg>
<span id="t50" style="left:817.1px;top:284.72px;color:#1e1e1e;font-size:9.0px;letter-spacing:0.024px;">Catalog</span>
<svg style="left:786.3000000000001px;top:300.66px;" width="5" height="7" viewBox="0 0 5 7"><path d="M0.6 0.8L4.2 3.5L0.6 6.2Z" fill="#fff" stroke="#1e1e1e" stroke-width="0.9"/></svg>
<svg style="left:802.3000000000001px;top:298.66px;" width="12" height="11" viewBox="0 0 12 11"><path d="M0.5 1.5H4.2L5.2 2.8H10.5V9.5H0.5Z" fill="#dcb67a"/></svg>
<span id="t51" style="left:817.1px;top:298.46000000000004px;color:#1e1e1e;font-size:9.0px;letter-spacing:0.371px;">Home</span>
<svg style="left:785.8000000000001px;top:315.4px;" width="6" height="6" viewBox="0 0 6 6"><path d="M5.4 0.4V5.4H0.4Z" fill="#1e1e1e"/></svg>
<svg style="left:801.5000000000001px;top:312.4px;" width="12" height="11" viewBox="0 0 12 11"><path d="M0.5 1.5H4.2L5.2 2.8H9.5V4H2.6L0.5 8.6Z" fill="#e6cf9f"/><path d="M2.8 4.4H11L8.8 9.5H0.6Z" fill="#f7ecd4" stroke="#dcb67a" stroke-width="0.6"/></svg>
<span id="t52" style="left:817.1px;top:312.2px;color:#1e1e1e;font-size:9.0px;letter-spacing:0.061px;">Patron</span>
<svg style="left:816.0px;top:326.14px;" width="12" height="11" viewBox="0 0 12 11"><path d="M1.5 0.5H6.5L9.5 3.5V10.5H1.5Z" fill="#fff" stroke="#555" stroke-width="0.9"/><path d="M6.5 0.5V3.5H9.5" fill="none" stroke="#555" stroke-width="0.9"/><text x="3" y="8.6" font-family="Liberation Sans, sans-serif" font-size="5.5" fill="#2f7d3a">@</text></svg>
<span id="t53" style="left:830.8px;top:325.94px;color:#1e1e1e;font-size:9.0px;letter-spacing:0.114px;">Detail.cshtml</span>
<svg style="left:816.0px;top:339.88px;" width="12" height="11" viewBox="0 0 12 11"><path d="M1.5 0.5H6.5L9.5 3.5V10.5H1.5Z" fill="#fff" stroke="#555" stroke-width="0.9"/><path d="M6.5 0.5V3.5H9.5" fill="none" stroke="#555" stroke-width="0.9"/><text x="3" y="8.6" font-family="Liberation Sans, sans-serif" font-size="5.5" fill="#2f7d3a">@</text></svg>
<span id="t54" style="left:830.8px;top:339.68px;color:#1e1e1e;font-size:9.0px;letter-spacing:0.139px;">Index.cshtml</span>
<svg style="left:786.3000000000001px;top:355.62px;" width="5" height="7" viewBox="0 0 5 7"><path d="M0.6 0.8L4.2 3.5L0.6 6.2Z" fill="#fff" stroke="#1e1e1e" stroke-width="0.9"/></svg>
<svg style="left:802.3000000000001px;top:353.62px;" width="12" height="11" viewBox="0 0 12 11"><path d="M0.5 1.5H4.2L5.2 2.8H10.5V9.5H0.5Z" fill="#dcb67a"/></svg>
<span id="t55" style="left:817.1px;top:353.42px;color:#1e1e1e;font-size:9.0px;letter-spacing:-0.322px;">Shared</span>
<svg style="left:802.3000000000001px;top:367.36px;" width="12" height="11" viewBox="0 0 12 11"><path d="M1.5 0.5H6.5L9.5 3.5V10.5H1.5Z" fill="#fff" stroke="#555" stroke-width="0.9"/><path d="M6.5 0.5V3.5H9.5" fill="none" stroke="#555" stroke-width="0.9"/><text x="3" y="8.6" font-family="Liberation Sans, sans-serif" font-size="5.5" fill="#2f7d3a">@</text></svg>
<span id="t56" style="left:817.1px;top:367.16px;color:#1e1e1e;font-size:9.0px;letter-spacing:0.065px;">_ViewImports.cshtml</span>
<svg style="left:802.3000000000001px;top:381.1px;" width="12" height="11" viewBox="0 0 12 11"><path d="M1.5 0.5H6.5L9.5 3.5V10.5H1.5Z" fill="#fff" stroke="#555" stroke-width="0.9"/><path d="M6.5 0.5V3.5H9.5" fill="none" stroke="#555" stroke-width="0.9"/><text x="3" y="8.6" font-family="Liberation Sans, sans-serif" font-size="5.5" fill="#2f7d3a">@</text></svg>
<span id="t57" style="left:817.1px;top:380.90000000000003px;color:#1e1e1e;font-size:9.0px;letter-spacing:-0.039px;">_ViewStart.cshtml</span>
<svg style="left:772.6px;top:396.84000000000003px;" width="5" height="7" viewBox="0 0 5 7"><path d="M0.6 0.8L4.2 3.5L0.6 6.2Z" fill="#fff" stroke="#1e1e1e" stroke-width="0.9"/></svg>
<svg style="left:787.0px;top:394.84000000000003px;" width="12" height="11" viewBox="0 0 12 11"><path d="M4.4 1H9.6M5.6 1V8C5.6 10 3.4 10.4 2 9.4M8.6 1V10" fill="none" stroke="#2d2d30" stroke-width="1.1"/><circle cx="2.2" cy="8.6" r="1.4" fill="none" stroke="#2d2d30" stroke-width="0.9"/></svg>
<span id="t58" style="left:803.4px;top:394.64000000000004px;color:#1e1e1e;font-size:9.0px;letter-spacing:0.035px;">appsettings.json</span>
<svg style="left:772.6px;top:410.58000000000004px;" width="5" height="7" viewBox="0 0 5 7"><path d="M0.6 0.8L4.2 3.5L0.6 6.2Z" fill="#fff" stroke="#1e1e1e" stroke-width="0.9"/></svg>
<svg style="left:788.6px;top:408.58000000000004px;" width="12" height="11" viewBox="0 0 12 11"><text x="0" y="7.6" font-family="Liberation Sans, sans-serif" font-size="8" font-weight="700" fill="#2f9a3f">C</text><path d="M6.2 2.6H9.8M6.2 4.6H9.8M7.2 1.6V5.6M8.8 1.6V5.6" stroke="#2f9a3f" stroke-width="0.8"/></svg>
<span id="t59" style="left:803.4px;top:408.38000000000005px;color:#1e1e1e;font-size:9.0px;letter-spacing:-0.012px;">Program.cs</span>
<svg style="left:772.6px;top:424.32px;" width="5" height="7" viewBox="0 0 5 7"><path d="M0.6 0.8L4.2 3.5L0.6 6.2Z" fill="#fff" stroke="#1e1e1e" stroke-width="0.9"/></svg>
<svg style="left:788.6px;top:422.32px;" width="12" height="11" viewBox="0 0 12 11"><text x="0" y="7.6" font-family="Liberation Sans, sans-serif" font-size="8" font-weight="700" fill="#2f9a3f">C</text><path d="M6.2 2.6H9.8M6.2 4.6H9.8M7.2 1.6V5.6M8.8 1.6V5.6" stroke="#2f9a3f" stroke-width="0.8"/></svg>
<span id="t60" style="left:803.4px;top:422.12px;color:#1e1e1e;font-size:9.0px;letter-spacing:-0.103px;">Startup.cs</span>
<svg style="left:758.4000000000001px;top:439.06px;" width="6" height="6" viewBox="0 0 6 6"><path d="M5.4 0.4V5.4H0.4Z" fill="#1e1e1e"/></svg>
<svg style="left:773.2px;top:436.06px;" width="12" height="11" viewBox="0 0 12 11"><rect x="0.6" y="1.4" width="10.4" height="8" fill="#fff" stroke="#2f7d3a" stroke-width="1"/><text x="1.6" y="8" font-family="Liberation Sans, sans-serif" font-size="6" font-weight="700" fill="#2f7d3a">C#</text></svg>
<span id="t61" style="left:789.7px;top:435.86px;color:#1e1e1e;font-size:9.0px;letter-spacing:-0.076px;">LibraryData</span>
<svg style="left:772.6px;top:451.8px;" width="5" height="7" viewBox="0 0 5 7"><path d="M0.6 0.8L4.2 3.5L0.6 6.2Z" fill="#fff" stroke="#1e1e1e" stroke-width="0.9"/></svg>
<svg style="left:787.6px;top:449.8px;" width="12" height="11" viewBox="0 0 12 11"><rect x="0.5" y="5.5" width="3.4" height="3.4" fill="#2d2d30"/><rect x="6.5" y="1" width="4" height="4" fill="#2d2d30"/><rect x="6" y="7" width="2.6" height="2.6" fill="#2d2d30"/><path d="M3 5.5L6.5 3.2M4 7.6L6 8" stroke="#2d2d30" stroke-width="0.8" stroke-dasharray="1 0.8"/></svg>
<span id="t62" style="left:803.4px;top:449.6px;color:#1e1e1e;font-size:9.0px;letter-spacing:-0.096px;">Dependencies</span>
<svg style="left:772.6px;top:465.54px;" width="5" height="7" viewBox="0 0 5 7"><path d="M0.6 0.8L4.2 3.5L0.6 6.2Z" fill="#fff" stroke="#1e1e1e" stroke-width="0.9"/></svg>
<svg style="left:788.6px;top:463.54px;" width="12" height="11" viewBox="0 0 12 11"><path d="M0.5 1.5H4.2L5.2 2.8H10.5V9.5H0.5Z" fill="#dcb67a"/></svg>
<span id="t63" style="left:803.4px;top:463.34000000000003px;color:#1e1e1e;font-size:9.0px;letter-spacing:0.198px;">Migrations</span>
<svg style="left:772.6px;top:479.28000000000003px;" width="5" height="7" viewBox="0 0 5 7"><path d="M0.6 0.8L4.2 3.5L0.6 6.2Z" fill="#fff" stroke="#1e1e1e" stroke-width="0.9"/></svg>
<svg style="left:788.6px;top:477.28000000000003px;" width="12" height="11" viewBox="0 0 12 11"><path d="M0.5 1.5H4.2L5.2 2.8H10.5V9.5H0.5Z" fill="#dcb67a"/></svg>
<span id="t64" style="left:803.4px;top:477.08000000000004px;color:#1e1e1e;font-size:9.0px;letter-spacing:0.131px;">Models</span>
<svg style="left:772.6px;top:493.02000000000004px;" width="5" height="7" viewBox="0 0 5 7"><path d="M0.6 0.8L4.2 3.5L0.6 6.2Z" fill="#fff" stroke="#1e1e1e" stroke-width="0.9"/></svg>
<svg style="left:788.6px;top:491.02000000000004px;" width="12" height="11" viewBox="0 0 12 11"><text x="0" y="7.6" font-family="Liberation Sans, sans-serif" font-size="8" font-weight="700" fill="#2f9a3f">C</text><path d="M6.2 2.6H9.8M6.2 4.6H9.8M7.2 1.6V5.6M8.8 1.6V5.6" stroke="#2f9a3f" stroke-width="0.8"/></svg>
<span id="t65" style="left:803.4px;top:490.82000000000005px;color:#1e1e1e;font-size:9.0px;letter-spacing:0.006px;">ICheckout.cs</span>
<svg style="left:772.6px;top:506.76px;" width="5" height="7" viewBox="0 0 5 7"><path d="M0.6 0.8L4.2 3.5L0.6 6.2Z" fill="#fff" stroke="#1e1e1e" stroke-width="0.9"/></svg>
<svg style="left:788.6px;top:504.76px;" width="12" height="11" viewBox="0 0 12 11"><text x="0" y="7.6" font-family="Liberation Sans, sans-serif" font-size="8" font-weight="700" fill="#2f9a3f">C</text><path d="M6.2 2.6H9.8M6.2 4.6H9.8M7.2 1.6V5.6M8.8 1.6V5.6" stroke="#2f9a3f" stroke-width="0.8"/></svg>
<span id="t66" style="left:803.4px;top:504.56px;color:#1e1e1e;font-size:9.0px;letter-spacing:-0.139px;">ILibraryAsset.cs</span>
<svg style="left:772.6px;top:520.5px;" width="5" height="7" viewBox="0 0 5 7"><path d="M0.6 0.8L4.2 3.5L0.6 6.2Z" fill="#fff" stroke="#1e1e1e" stroke-width="0.9"/></svg>
<svg style="left:788.6px;top:518.5px;" width="12" height="11" viewBox="0 0 12 11"><text x="0" y="7.6" font-family="Liberation Sans, sans-serif" font-size="8" font-weight="700" fill="#2f9a3f">C</text><path d="M6.2 2.6H9.8M6.2 4.6H9.8M7.2 1.6V5.6M8.8 1.6V5.6" stroke="#2f9a3f" stroke-width="0.8"/></svg>
<span id="t67" style="left:803.4px;top:518.3px;color:#1e1e1e;font-size:9.0px;letter-spacing:-0.103px;">IPatron.cs</span>
</div></div>
<div style="left:0px;top:532.5px;width:1023px;height:17px;background:#40508d;"></div>
<svg style="left:-2px;top:537.5px;" width="11" height="9" viewBox="0 0 11 9"><path d="M0 1H9.5L7.8 7.6H0" fill="none" stroke="#fff" stroke-width="1"/></svg>
<span id="t68" style="left:15.5px;top:536.0px;color:#fff;font-size:9.0px;letter-spacing:-0.403px;">Ready</span>
<svg style="left:878.5px;top:536.5px;" width="7" height="9" viewBox="0 0 7 9"><path d="M3.5 8.6V1.4M0.8 4L3.5 1.2L6.2 4" fill="none" stroke="#fff" stroke-width="1.5"/></svg>
<span id="t69" style="left:893px;top:536.0px;color:#fff;font-size:9.0px;letter-spacing:0.068px;">Add to Source Control</span>
<svg style="left:988.5px;top:539.5px;" width="5" height="3" viewBox="0 0 5 3"><path d="M0 3L2.5 0L5 3Z" fill="#fff"/></svg>
<svg style="left:1011px;top:535.5px;" width="9" height="10" viewBox="0 0 9 10"><path d="M4.5 0.5C2.6 0.5 1.8 2 1.8 3.6C1.8 5.6 1 6.6 0.4 7.4H8.6C8 6.6 7.2 5.6 7.2 3.6C7.2 2 6.4 0.5 4.5 0.5ZM3.4 8.2C3.6 9.4 5.4 9.4 5.6 8.2Z" fill="#dfe4f4"/></svg>
<div style="left:1017px;top:539.5px;width:8px;height:8px;background:#e03c31;border-radius:50%;"></div>
<span id="t70" style="left:1019px;top:537.6px;color:#fff;font-size:6.5px;">2</span>
<div style="left:0px;top:549.5px;width:1023px;height:17.5px;background:#212124;"></div>
<div style="left:0px;top:549.5px;width:31px;height:17.5px;background:#212124;"></div>
<svg style="left:5.8px;top:559px;" width="12.6" height="8" viewBox="0 0 12.6 8"><path d="M0 0.9L5.4 0.2V5.9H0ZM6.4 0.1L12.6 -0.8V5.9H6.4ZM0 6.9H5.4V12H0ZM6.4 6.9H12.6V12H6.4Z" fill="#fff"/></svg>
<div style="left:31px;top:549.5px;width:263px;height:17.5px;background:#f3f3f3;"></div>
<svg style="left:42px;top:558px;" width="12" height="10" viewBox="0 0 12 10"><circle cx="6" cy="6" r="4" fill="none" stroke="#2d2d30" stroke-width="1.2"/></svg>
<span id="t71" style="left:62px;top:560.3px;color:#3a3a3a;font-size:11.2px;letter-spacing:-0.100px;">Type here to search</span>
<svg style="left:305px;top:559px;" width="14" height="9" viewBox="0 0 14 9"><circle cx="7" cy="8" r="5.4" fill="none" stroke="#fff" stroke-width="1.4"/></svg>
<svg style="left:342px;top:559px;" width="14" height="9" viewBox="0 0 14 9"><path d="M2 0.5V9M9 0.5V9M2 4H9" fill="none" stroke="#fff" stroke-width="1.2"/><rect x="11" y="1" width="1.4" height="1.4" fill="#fff"/><rect x="11" y="4.4" width="1.4" height="1.4" fill="#fff"/></svg>
<svg style="left:380px;top:556.5px;" width="17" height="11" viewBox="0 0 17 11"><path d="M2.2 11C0.6 5.4 5.4 0.8 10 1.4C13.6 1.8 15.6 5 15.4 8.4H6.4C6.4 9.6 7 10.4 8 11Z" fill="#0c7bd6"/><path d="M6.4 6.4C6.8 4.6 10.6 4.4 11 6.4Z" fill="#1f2024"/></svg>
<svg style="left:417px;top:558px;" width="17" height="9" viewBox="0 0 17 9"><path d="M0.5 0.5H6L7.4 2H16.5V9H0.5Z" fill="#f2c14a"/><path d="M0.5 3.2H16.5V9H0.5Z" fill="#fbd773"/><rect x="4" y="6.4" width="9" height="2.6" fill="#4ca3e0"/></svg>
<svg style="left:454px;top:556.5px;" width="16" height="11" viewBox="0 0 16 11"><path d="M5 4C5 0.4 11 0.4 11 4" fill="none" stroke="#e8e8e8" stroke-width="1"/><path d="M1 3.6H15V11H1Z" fill="#f4f4f4"/><rect x="4.6" y="6.6" width="3" height="4.4" fill="#e8432e"/><rect x="8.4" y="6.6" width="3" height="4.4" fill="#6fbf2a"/></svg>
<svg style="left:491.5px;top:558.5px;" width="15" height="9" viewBox="0 0 15 9"><rect x="0.5" y="0.5" width="14" height="9" fill="#5b8fc7" stroke="#b9d0ea" stroke-width="1"/><path d="M5.5 2.6L11 6.4L5.5 10Z" fill="#f29b27"/></svg>
<svg style="left:529.5px;top:556.5px;" width="17" height="11" viewBox="0 0 17 11"><circle cx="8.5" cy="9" r="8" fill="#db4437"/><path d="M8.5 9L1.4 5.2A8 8 0 0 0 5 16.2Z" fill="#0f9d58"/><path d="M8.5 9L12 16.2A8 8 0 0 0 16.4 7.6Z" fill="#ffcd40"/><circle cx="8.5" cy="9" r="3.6" fill="#fff"/><circle cx="8.5" cy="9" r="2.8" fill="#4285f4"/></svg>
<svg style="left:566px;top:557px;" width="19" height="10" viewBox="0 0 19 10"><path d="M0.5 5L9.5 0.4L18.5 5V10H0.5Z" fill="#2a8ad8"/><path d="M0.8 5.4L9.5 10L18.2 5.4V10H0.8Z" fill="#eef5fb"/><path d="M0.5 5L9.5 9.6L18.5 5" fill="none" stroke="#1669b2" stroke-width="0.8"/></svg>
<svg style="left:604px;top:556px;" width="18" height="11" viewBox="0 0 18 11"><text x="2" y="15" font-family="Liberation Sans, sans-serif" font-size="21" font-weight="700" fill="#2aa3ea">e</text><path d="M1 9C3 3 12 0 17 2" fill="none" stroke="#f5c231" stroke-width="1.4"/></svg>
<svg style="left:643px;top:557px;" width="16" height="10" viewBox="0 0 16 10"><path d="M0.8 3C0.8 0.6 7 0.6 7 3V10H0.8Z" fill="#f2c318"/><path d="M9.4 1.2H12.4M13.6 3V6" stroke="#2aa05a" stroke-width="1.3" fill="none"/><path d="M8.4 10L11 5.4L13.6 10Z" fill="#2aa05a"/></svg>
<svg style="left:678.5px;top:556.5px;" width="19" height="11" viewBox="0 0 19 11"><path d="M13.4 0.6L18 2.6V11H13.4L5.4 8.4L2.2 11H0.8V5.6L2.2 4.6L5.4 7.6ZM13.4 5L9 9.4L13.4 11Z" fill="#8c5bd8" fill-rule="evenodd"/></svg>
<svg style="left:717px;top:559px;" width="16" height="8" viewBox="0 0 16 8"><rect x="0.5" y="0.5" width="15" height="8" fill="#e8eef5"/><rect x="4" y="2.4" width="6.4" height="6" fill="#1e7fd6"/></svg>
<div style="left:744.5px;top:549.5px;width:35.5px;height:17.5px;background:#4a4a4e;"></div>
<svg style="left:752px;top:555.5px;" width="22" height="12" viewBox="0 0 22 12"><circle cx="11" cy="12" r="9.4" fill="none" stroke="#f0f0f0" stroke-width="1.8"/><circle cx="8" cy="10.5" r="1.3" fill="#f0f0f0"/><circle cx="12.5" cy="8.4" r="1.3" fill="#f0f0f0"/><path d="M14 12C16 10.6 18 11.4 19.4 13" fill="none" stroke="#f0f0f0" stroke-width="1.4"/></svg>
<svg style="left:880.5px;top:562.5px;" width="9" height="5" viewBox="0 0 9 5"><path d="M0.6 4.6L4.5 0.8L8.4 4.6" fill="none" stroke="#fff" stroke-width="1.1"/></svg>
<svg style="left:897px;top:559.5px;" width="12" height="8" viewBox="0 0 12 8"><rect x="1" y="1.6" width="8.6" height="6" fill="none" stroke="#fff" stroke-width="1"/><rect x="2.4" y="3" width="5" height="4.4" fill="#fff"/><path d="M0.4 0.4L3.4 2.6" stroke="#fff" stroke-width="1"/></svg>
<svg style="left:919px;top:559px;" width="11" height="8" viewBox="0 0 11 8"><path d="M1 8C1 3.6 5 1 9.6 1M3.6 8C3.6 5.4 6 3.6 9.6 3.6M6.2 8C6.2 7 7.4 6.2 9.6 6.2" fill="none" stroke="#bdbdbd" stroke-width="1"/></svg>
<svg style="left:934.5px;top:558.5px;" width="12" height="9" viewBox="0 0 12 9"><path d="M0.6 4.4H2.6L5.2 1.6V9H0.6Z" fill="none" stroke="#fff" stroke-width="1"/><path d="M7 3C8.2 4.4 8.2 7 7 8.6M9 1.6C11 3.8 11 7.6 9 9.6" fill="none" stroke="#fff" stroke-width="0.9"/></svg>
<span id="t72" style="left:956.4px;top:552.4px;color:#fff;font-size:10px;letter-spacing:-0.864px;">12:26 PM</span>
<svg style="left:1007px;top:559px;" width="13" height="8" viewBox="0 0 13 8"><path d="M1 8V1H12V8" fill="none" stroke="#fff" stroke-width="1.2"/></svg>
</div></body></html>
